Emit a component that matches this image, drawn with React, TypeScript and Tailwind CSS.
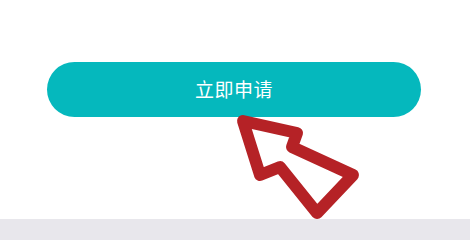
export default function App() {
  return (
    <div className="relative flex h-[240px] w-[470px] flex-col overflow-hidden bg-white font-['Noto_Sans_CJK_SC',sans-serif]">
      <div className="flex-1 pl-[47px] pr-[49px] pt-[62px]">
        <button className="flex h-[55px] w-full items-center justify-center rounded-full bg-[#05b8bd] pb-px text-[19px] tracking-[0.5px] text-white">
          立即申请
        </button>
      </div>
      <div className="h-[21px] bg-[#e8e7ec]" />

      {/* annotation arrow drawn over the page */}
      <svg className="absolute left-0 top-0" width="470" height="240" viewBox="0 0 470 240">
        <path
          d="M243 121 L297 133 L292 147 L353 175 L317 213 L280 167 L260 175 Z"
          fill="none"
          stroke="#b52226"
          strokeWidth="12"
          strokeLinejoin="round"
        />
      </svg>
    </div>
  );
}
